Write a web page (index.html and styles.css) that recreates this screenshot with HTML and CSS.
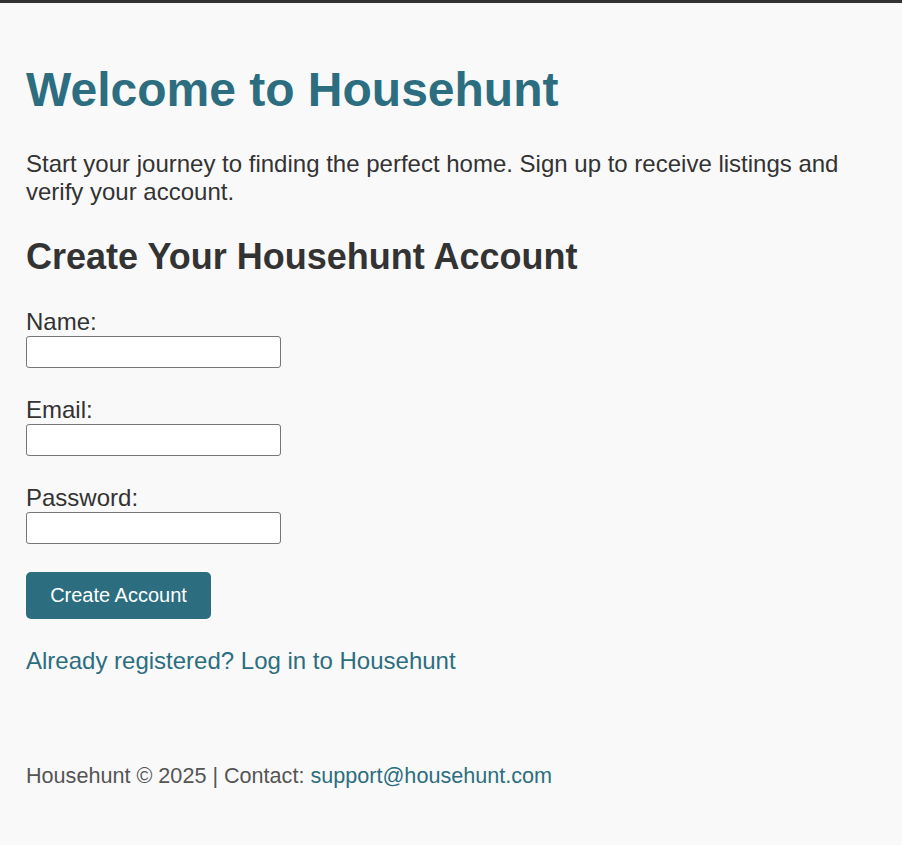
FILE: index.html
```html
<!DOCTYPE html>
<html lang="en">
<head>
<meta charset="utf-8">
<title>Househunt</title>
<link rel="stylesheet" href="styles.css">
</head>
<body>
<main class="page">
  <h1 class="title">Welcome to Househunt</h1>
  <p class="intro">Start your journey to finding the perfect home. Sign up to receive listings and verify your account.</p>
  <h2 class="subtitle">Create Your Househunt Account</h2>
  <form class="form">
    <div class="field">
      <label class="label" for="name">Name:</label>
      <input class="input" type="text" id="name">
    </div>
    <div class="field">
      <label class="label" for="email">Email:</label>
      <input class="input" type="email" id="email">
    </div>
    <div class="field">
      <label class="label" for="password">Password:</label>
      <input class="input" type="password" id="password">
    </div>
    <button class="button" type="button">Create Account</button>
  </form>
  <p class="login"><a class="link" href="#">Already registered? Log in to Househunt</a></p>
  <footer class="footer">Househunt © 2025 | Contact: <a class="link" href="#">support@househunt.com</a></footer>
</main>
</body>
</html>
```
FILE: styles.css
```css
html, body {
  margin: 0;
  padding: 0;
}
body {
  background: #f9f9f9;
  border-top: 3px solid #333;
  font-family: "Liberation Sans", Arial, sans-serif;
  color: #333;
  font-size: 24px;
  line-height: 28px;
}
.page {
  padding: 59px 26px 40px;
}
.title {
  margin: 0;
  font-size: 48px;
  line-height: 56px;
  color: #2c6e80;
  font-weight: bold;
}
.intro {
  margin: 32px 0 0;
}
.subtitle {
  margin: 30px 0 0;
  font-size: 36px;
  line-height: 42px;
  font-weight: bold;
}
.form {
  display: flex;
  flex-direction: column;
  align-items: flex-start;
  margin-top: 30px;
}
.field {
  display: flex;
  flex-direction: column;
  margin-bottom: 28px;
}
.label {
  line-height: 28px;
}
.input {
  width: 255px;
  height: 32px;
  box-sizing: border-box;
  border: 1px solid #767676;
  border-radius: 3px;
  background: #fff;
  margin: 0;
}
.button {
  background: #2c6e80;
  color: #fff;
  border: none;
  border-radius: 5px;
  font-family: inherit;
  font-size: 20px;
  width: 185px;
  height: 47px;
  padding: 0;
}
.login {
  margin: 28px 0 0;
}
.link {
  color: #2c6e80;
  text-decoration: none;
}
.footer {
  margin-top: 88px;
  color: #555;
  font-size: 21.6px;
  line-height: 25px;
}
```
